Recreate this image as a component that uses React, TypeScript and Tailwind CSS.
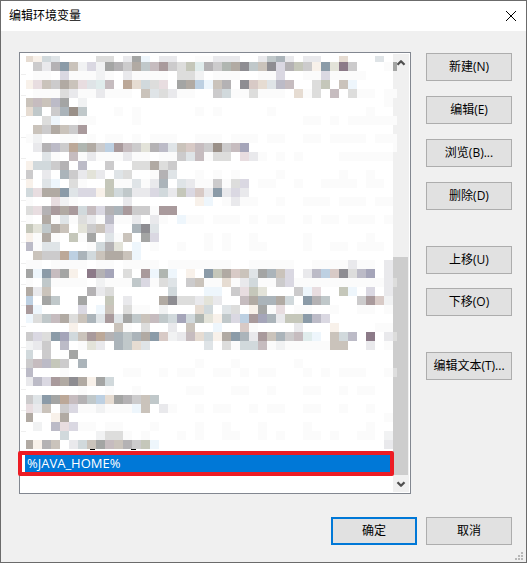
import { ChevronDown, ChevronUp, X } from "lucide-react"

const palette: Record<string, string> = {
  a: "#fbfbfb", b: "#e9e9ec", c: "#dddddc", d: "#cccbcc", e: "#b4b2b4",
  f: "#a4a5a4", g: "#8e8d92", h: "#d1d9dc", i: "#dfe4e7", j: "#c0c8ca",
  k: "#abb4ba", l: "#8b9ba8", m: "#cac3bb", n: "#b1aaa3", o: "#9a9088",
  p: "#e6dcd2", q: "#d8cac6", r: "#c6bcbf", s: "#a99a9c", t: "#8c7a88",
  u: "#dad8e2", v: "#bcbbc7", w: "#a5a5b9", x: "#c5c7ba", y: "#e3e3d9",
  z: "#eef6fc", A: "#f8f1ea", B: "#bdd0e2", C: "#bca898", D: "#f1f2f3",
  E: "#e8dde0", F: "#e0ecec", G: "#b0b6b1",
}

// one string per row, one letter per 9px block
const mosaic = [
  "pAhi....cc.bfz.bb..aabbb..bjkb.bb..p...i..",
  ".dbelmDuDfednjrsdcxFedGngjmguexdAlytd...af",
  ".aa.uaaaDa.baaaa.ccD.aaa..aau..aauaaaa....",
  "AEmdnmEiFr.CphcE.fnBzme.gqpivr..cx.mz.....",
  ".aaacbaabaaa.micbaa..dhaacaaa.pac.r.caa.aa",
  "mrmvf.D.................................a.",
  "pj.dkoj...a.a......a.a.....a..........a...",
  "..cz..aa....a..................aa.a.aaaaaa",
  ".mdnmds...................................",
  "aD..aa.a.aa.a.aaa..aaa.aaa.aa..aa.aaaa.aaa",
  ".bevdCGndBsrdyevimqrdodrw................a",
  "..ia.rabaaabaa.aadiracc.Eba.a.a....aaaaaa.",
  "Ahhde.v..d..ccncd.........................",
  "d.b.kdbyb.ic..aei..a.a.a....a......a..a...",
  "A.iz.ca..xaaiabk.ibaadacu.aa..a..aaaa.aa..",
  "hEnnliuuAxhjbbuhbxuqblbub.................",
  "a..EDa.....b.......Az.abaa..a..aaa.aaa.aa.",
  "cEesnshrueksddass.........................",
  "a.naiacbavaab.ba.zaa.aaa.a.aa..a.aa.aaa.a.",
  "xyjnm.ydmu..kgi...........................",
  "Aana.xaf.iam.fu.....a.a..a.....a......a...",
  "vaii...ahey.z.a..a..a.a..aa....a..aa.aaa..",
  ".mddCBkhmnnmz.............................",
  "aa.aaaa.aa.aaaa.aaaaaaa..aaaaa..aaaabaa.b.",
  "fzlrfA.tew.c.szGz.A.lxnqmifkmu.bvBqgcvw.b.",
  "a.jaaaa.Daaajuaci.dmaapabhaaduaaaaaaaaaabc",
  "nbm....ebc......h...zz.dExy...dzE..xz.u.b.",
  "B.fj..f..x.b...ngccbyb..rnkknh.lej...dsqD.",
  "sz....u.zm.caa.D...ph.ic.AfaE.aa..a..aa.a.",
  "zcjrncmkisifjmrjhwhGyAjuBswkbxxlvu........",
  ".....A....ma.c..b.m..z..qa....b...A....aa.",
  "duclwhmsCekjknlqDbrphAnlkbsmkdrFz.mhv.t.bc",
  "Dbd.v.ayb.kjpi......i.cahhraDaaaaamm..b.a.",
  "h.d..f....................................",
  "drvxd.k............a...a......a...........",
  "v...a......aa..a.aa..aa.a.aa...a.a.aaa..aa",
  "bvusngnAfh................................",
  "......a..a..a.....aa...aa..a...aa..a.aa...",
  "dilfCrejBpfedmj...........................",
  "Ebm.duaaDaaazm.ba..a.aa..a.aa..aa..a..a...",
  "n..An...................................a.",
  ".D.vEuaa.aa...a....a..a...a....a......a...",
  "....h...Dcca.a...a.a..aa..a.a..aa.a..aa.D.",
  "nAem.bhmfrmedxz.........................b.",
]

const rowLines = Array.from({ length: 18 }, (_, i) => 21 + i * 21)

function HiddenEntries() {
  return (
    <svg width="378" height="400" className="relative z-10 block overflow-visible" shapeRendering="crispEdges" aria-hidden="true">
      {rowLines.map((y) => (
        <rect key={y} x="1" y={y} width="5" height="1" fill="#efefef" />
      ))}
      {mosaic.map((row, r) =>
        row.split("").map((key, c) => {
          if (key === ".") return null
          return (
            <rect
              key={`${r}-${c}`}
              x={c === 0 ? 6 : 4 + c * 9}
              y={r === 0 ? 3 : r * 9}
              width={c === 0 ? 7 : c === 41 ? 4 : 9}
              height={r === 0 ? 6 : 9}
              fill={c === 41 && key === "a" && r > 22 ? "#dedede" : palette[key]}
            />
          )
        })
      )}
      <rect x="70" y="396" width="5" height="1" fill="#000" />
      <rect x="111" y="396" width="5" height="1" fill="#000" />
    </svg>
  )
}

function DialogButton({ label, primary = false }: { label: string; primary?: boolean }) {
  return (
    <button
      type="button"
      className={
        primary
          ? "h-7 w-[86px] shrink-0 border-2 border-[#0078d7] bg-[#e1e1e1] text-center hover:bg-[#e5f1fb]"
          : "h-7 w-[86px] shrink-0 border border-[#adadad] bg-[#e1e1e1] text-center hover:bg-[#e5f1fb]"
      }
    >
      {label}
    </button>
  )
}

function ScrollBar() {
  return (
    <div className="my-px mr-px flex w-4 shrink-0 flex-col bg-[#f0f0f0]">
      <button type="button" aria-label="向上滚动" className="flex h-[17px] items-center justify-center text-[#505050]">
        <ChevronUp size={14} strokeWidth={4} strokeLinecap="butt" />
      </button>
      <div className="flex flex-1 flex-col justify-end">
        <div className="mr-px h-[218px] bg-[#cdcdcd]" />
      </div>
      <button type="button" aria-label="向下滚动" className="flex h-[17px] items-center justify-center text-[#505050]">
        <ChevronDown size={14} strokeWidth={4} strokeLinecap="butt" />
      </button>
    </div>
  )
}

export default function App() {
  return (
    <div className="flex min-h-screen flex-col border border-[#6b6b6b] bg-[#f0f0f0] font-['Open_Sans','Noto_Sans_CJK_SC',sans-serif] text-xs text-black">
      <header className="flex h-[30px] items-center justify-between bg-white pl-2 pr-[5px]">
        <h1>编辑环境变量</h1>
        <button type="button" aria-label="关闭" className="flex size-5 items-center justify-center">
          <X size={20} strokeWidth={1.2} strokeLinecap="butt" />
        </button>
      </header>

      <main className="flex items-start gap-[15px] pl-[18px] pr-3.5 pt-[21px]">
        <div className="flex min-w-0 flex-1 border border-[#828790] bg-white">
          <ul role="listbox" aria-label="环境变量" className="min-w-0 flex-1 pb-[19px]">
            <li role="presentation">
              <HiddenEntries />
            </li>
            <li role="option" aria-selected="true" className="relative z-10 pl-[5px]">
              <div className="h-[21px] bg-[#0078d7] pl-0.5 text-[13px] leading-[21px] text-white">%JAVA_HOME%</div>
              <div className="pointer-events-none absolute -inset-y-0.5 -left-0.5 -right-px rounded-xs border-4 border-[#ed1c24]" />
            </li>
          </ul>
          <ScrollBar />
        </div>

        <div className="flex flex-col gap-9 pt-px">
          <div className="flex flex-col gap-[15px]">
            <DialogButton label="新建(N)" />
            <DialogButton label="编辑(E)" />
            <DialogButton label="浏览(B)..." />
            <DialogButton label="删除(D)" />
          </div>
          <div className="flex flex-col gap-3.5">
            <DialogButton label="上移(U)" />
            <DialogButton label="下移(O)" />
          </div>
          <DialogButton label="编辑文本(T)..." />
        </div>
      </main>

      <footer className="relative flex justify-end gap-[9px] pb-[17px] pr-3.5 pt-[23px]">
        <DialogButton label="确定" primary />
        <DialogButton label="取消" />
        <svg width="8" height="8" className="absolute bottom-0.5 right-[3px] fill-[#b8b8b8]" shapeRendering="crispEdges" aria-hidden="true">
          <path d="M6 0h2v2h-2zM3 3h2v2h-2zM6 3h2v2h-2zM0 6h2v2h-2zM3 6h2v2h-2zM6 6h2v2h-2z" />
        </svg>
      </footer>
    </div>
  )
}
